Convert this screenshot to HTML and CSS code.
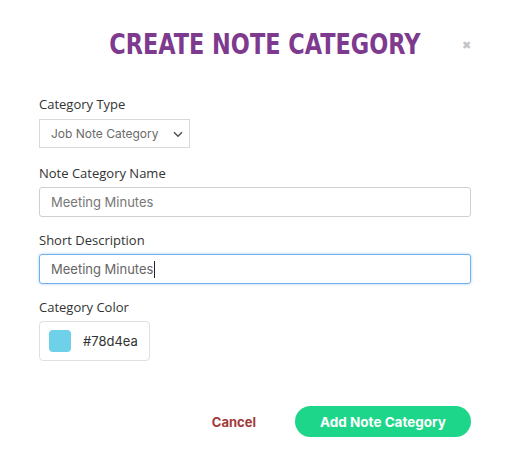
FILE: index.html
```html
<!DOCTYPE html>
<html>
<head>
<meta charset="utf-8">
<link rel="stylesheet" href="styles.css">
</head>
<body>
<div class="modal">
  <div class="header">
    <h1 class="title">CREATE NOTE CATEGORY</h1>
    <span class="close">&#10006;</span>
  </div>
  <form class="form">
    <div class="field">
      <label class="label">Category Type</label>
      <div class="select">
        <span>Job Note Category</span>
        <svg class="chev" width="10" height="7" viewBox="0 0 10 7"><path d="M1 1.2 L5 5.2 L9 1.2" fill="none" stroke="#555" stroke-width="1.6"/></svg>
      </div>
    </div>
    <div class="field">
      <label class="label">Note Category Name</label>
      <div class="input">Meeting Minutes</div>
    </div>
    <div class="field">
      <label class="label">Short Description</label>
      <div class="input focus">Meeting Minutes<span class="caret"></span></div>
    </div>
    <div class="field">
      <label class="label">Category Color</label>
      <div class="color">
        <span class="swatch"></span>
        <span class="hex">#78d4ea</span>
      </div>
    </div>
  </form>
  <div class="actions">
    <span class="cancel">Cancel</span>
    <span class="submit">Add Note Category</span>
  </div>
</div>
</body>
</html>
```
FILE: styles.css
```css
html, body {
  margin: 0;
  padding: 0;
  background: #fff;
}
.modal {
  width: 511px;
  height: 449px;
  box-sizing: border-box;
  padding: 26px 40px 0 39px;
  font-family: "Open Sans", sans-serif;
}
.header {
  display: flex;
  align-items: center;
  justify-content: center;
  position: relative;
  height: 36px;
}
.title {
  margin: 0;
  font-family: "DejaVu Sans Condensed", "DejaVu Sans", sans-serif;
  font-weight: 700;
  font-size: 28px;
  color: #7d3a8e;
  margin-left: 20px;
  transform: scaleX(0.89);
  white-space: nowrap;
}
.close {
  position: absolute;
  right: 0;
  top: 13px;
  font-size: 11px;
  color: #c4c4c4;
  line-height: 1;
}
.form {
  margin-top: 33px;
  display: flex;
  flex-direction: column;
  gap: 14px;
}
.field {
  display: flex;
  flex-direction: column;
  align-items: flex-start;
}
.label {
  font-size: 13px;
  color: #333;
  line-height: 18px;
  margin-bottom: 5px;
}
.select {
  width: 151px;
  height: 29px;
  box-sizing: border-box;
  border: 1px solid #d9d9d9;
  display: flex;
  align-items: center;
  justify-content: space-between;
  padding: 0 6px 0 11px;
  margin-top: 1px;
  margin-bottom: 2px;
  font-family: "Inter", sans-serif;
  font-size: 12px;
  color: #6a6a6a;
}
.chev { margin-top: 1px; }
.input {
  width: 100%;
  height: 30px;
  box-sizing: border-box;
  border: 1px solid #cfcfcf;
  border-radius: 3px;
  padding: 0 11px;
  display: flex;
  align-items: center;
  font-family: "Inter", sans-serif;
  font-size: 13px;
  color: #777;
}
.input.focus {
  border-color: #6fb0ee;
  box-shadow: 0 0 3px rgba(100, 160, 240, 0.55);
  color: #666;
}
.caret {
  display: inline-block;
  width: 1px;
  height: 17px;
  background: #222;
  margin-left: 1px;
}
.color {
  width: 111px;
  height: 40px;
  box-sizing: border-box;
  border: 1px solid #e0e0e0;
  border-radius: 4px;
  display: flex;
  align-items: center;
  padding-left: 9px;
  gap: 12px;
}
.swatch {
  width: 22px;
  height: 22px;
  border-radius: 4px;
  background: #6fd0e9;
}
.hex {
  font-family: "Inter", sans-serif;
  font-size: 13px;
  color: #333;
}
.actions {
  margin-top: 45px;
  display: flex;
  justify-content: flex-end;
  align-items: center;
  gap: 39px;
}
.cancel {
  font-family: "Inter", sans-serif;
  font-weight: 700;
  font-size: 13px;
  color: #a33a3a;
}
.submit {
  width: 176px;
  height: 31px;
  border-radius: 16px;
  background: #1ed68a;
  color: #fff;
  font-family: "Inter", sans-serif;
  font-weight: 700;
  font-size: 13.5px;
  display: flex;
  align-items: center;
  justify-content: center;
}
```
